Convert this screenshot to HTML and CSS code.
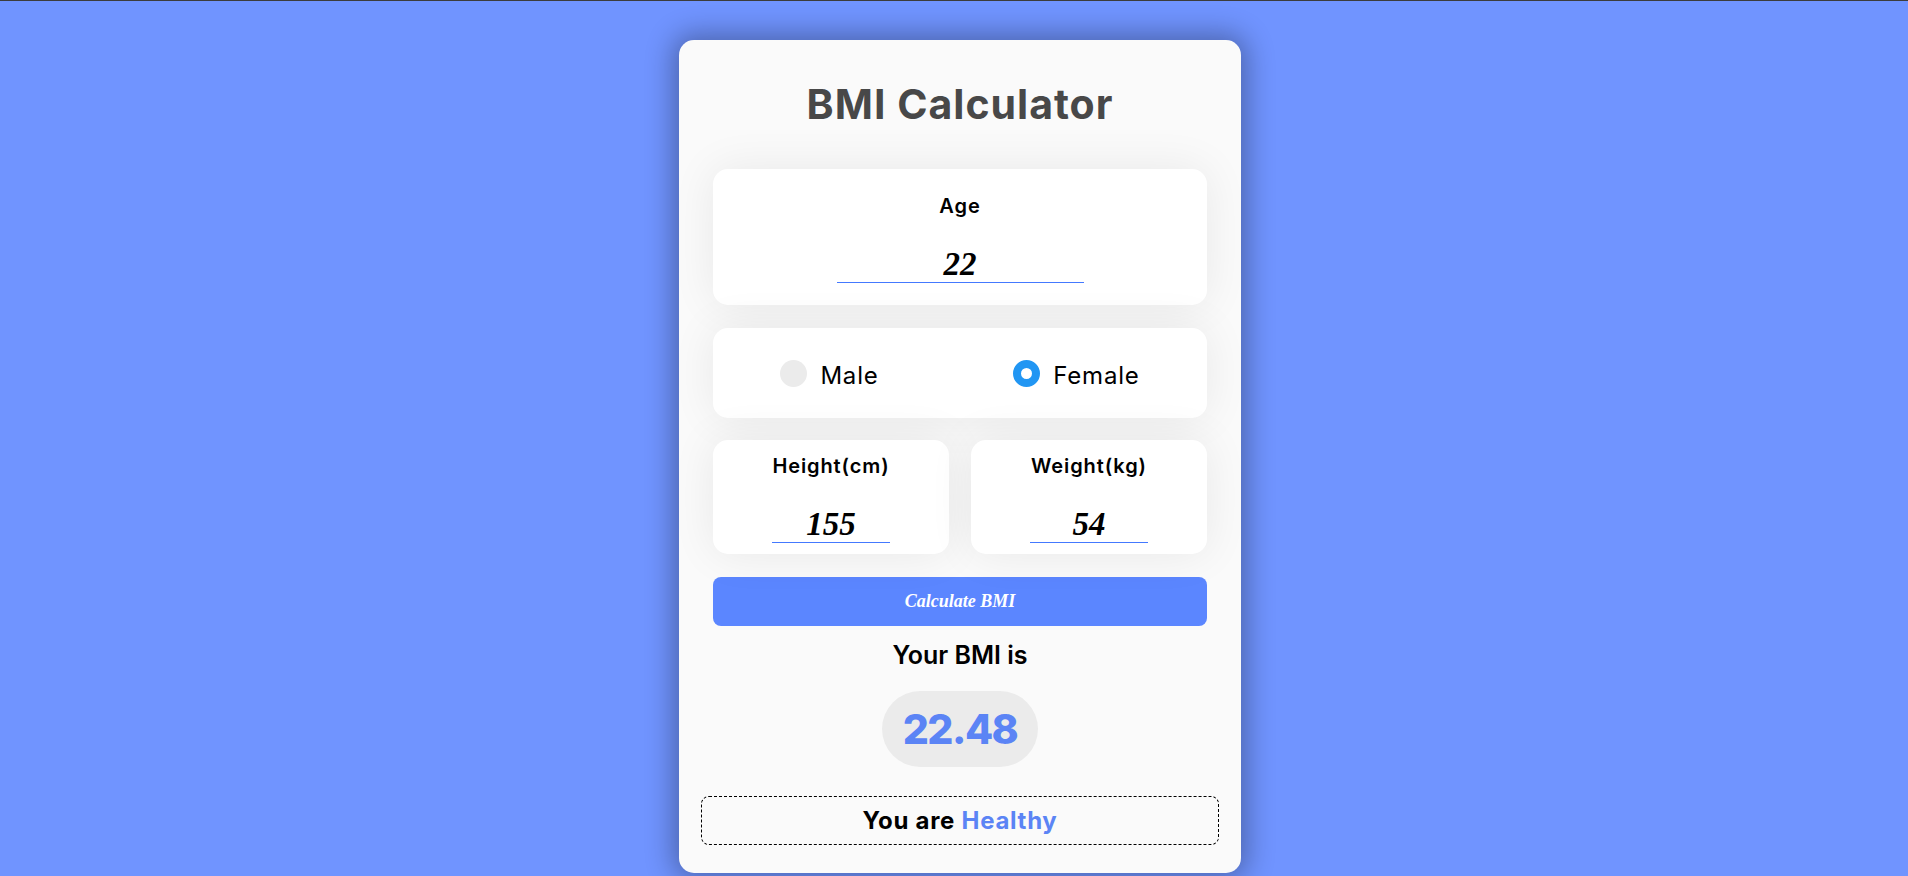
FILE: index.html
```html
<!DOCTYPE html>
<html lang="en">
<head>
<meta charset="utf-8">
<title>BMI Calculator</title>
<link rel="stylesheet" href="styles.css">
</head>
<body>
<div class="card">
  <h1 class="title">BMI Calculator</h1>

  <div class="box age-box">
    <label class="field-label" for="age">Age</label>
    <input class="field-input age-input" id="age" type="text" value="22">
  </div>

  <div class="box gender-box">
    <div class="radio">
      <span class="radio-dot"></span>
      <span class="radio-text">Male</span>
    </div>
    <div class="radio">
      <span class="radio-dot checked"></span>
      <span class="radio-text">Female</span>
    </div>
  </div>

  <div class="pair">
    <div class="box small-box">
      <label class="field-label" for="height">Height(cm)</label>
      <input class="field-input" id="height" type="text" value="155">
    </div>
    <div class="box small-box">
      <label class="field-label" for="weight">Weight(kg)</label>
      <input class="field-input" id="weight" type="text" value="54">
    </div>
  </div>

  <button class="calc-btn" type="button">Calculate BMI</button>

  <p class="result-label">Your BMI is</p>
  <div class="pill-row"><span class="pill">22.48</span></div>

  <div class="status">You are <span class="status-word">Healthy</span></div>
</div>
</body>
</html>
```

FILE: styles.css
```css
* { box-sizing: border-box; }

html, body {
  margin: 0;
  padding: 0;
}

body {
  background: #7094ff;
  border-top: 1px solid #3c3c3c;
  height: 876px;
  overflow: hidden;
  padding-left: 12px;
  font-family: "Inter", "Noto Sans", sans-serif;
}

.card {
  width: 562px;
  margin: 39px auto 0;
  background: #fafafa;
  border-radius: 15px;
  padding: 0 22px 28px;
  box-shadow: 0 0 28px 6px rgba(0, 0, 0, 0.32);
}

.title {
  margin: 0 0 35px;
  padding-top: 34px;
  line-height: 60px;
  font-size: 41px;
  font-weight: 700;
  letter-spacing: 1px;
  text-align: center;
  color: #484848;
}

.box {
  margin: 0 12px;
  background: #ffffff;
  border-radius: 15px;
  box-shadow: 0 0 45px rgba(0, 0, 0, 0.075);
}

.age-box {
  display: flex;
  flex-direction: column;
  align-items: center;
  padding: 22px 0;
  height: 136px;
}

.field-label {
  display: block;
  line-height: 30px;
  font-size: 20px;
  font-weight: 600;
  letter-spacing: 0.9px;
  color: #000;
  text-align: center;
}

.field-input {
  display: block;
  width: 50%;
  height: 44px;
  margin-top: 18px;
  border: none;
  border-bottom: 1px solid #4479ff;
  background: transparent;
  text-align: center;
  font-family: "Liberation Serif", "DejaVu Serif", serif;
  font-style: italic;
  font-weight: 700;
  font-size: 33px;
  color: #000;
  padding: 7px 0 0;
  outline: none;
}

.gender-box {
  margin-top: 23px;
  height: 90px;
  display: flex;
  align-items: center;
  justify-content: space-around;
}

.radio {
  display: flex;
  align-items: center;
  gap: 13px;
}

.radio-dot {
  width: 27px;
  height: 27px;
  border-radius: 50%;
  background: #ebebeb;
}

.radio-dot.checked {
  background: #ffffff;
  border: 8px solid #2196f3;
}

.radio-text {
  font-size: 24px;
  font-weight: 400;
  letter-spacing: 0.8px;
  color: #000;
  padding-top: 4px;
}

.pair {
  display: flex;
  gap: 22px;
  margin: 22px 12px 0;
}

.pair .box {
  margin: 0;
  flex: 1;
}

.small-box {
  display: flex;
  flex-direction: column;
  align-items: center;
  height: 114px;
  padding: 11px 0;
}

.calc-btn {
  display: block;
  width: calc(100% - 24px);
  margin: 23px 12px 0;
  height: 49px;
  border: none;
  border-radius: 8px;
  background: #5b86ff;
  color: #ffffff;
  font-family: "Liberation Serif", "DejaVu Serif", serif;
  font-style: italic;
  font-weight: 700;
  font-size: 18px;
}

.result-label {
  margin: 11px 0 0;
  line-height: 36px;
  font-size: 25px;
  font-weight: 600;
  letter-spacing: 0;
  text-align: center;
  color: #000;
}

.pill-row {
  display: flex;
  justify-content: center;
  margin-top: 18px;
}

.pill {
  display: flex;
  align-items: center;
  justify-content: center;
  width: 156px;
  height: 76px;
  border-radius: 38px;
  background: #ebebeb;
  color: #5b84f5;
  font-size: 41px;
  font-weight: 800;
  letter-spacing: -1.5px;
}

.status {
  margin-top: 29px;
  height: 49px;
  border: 1px dashed #000;
  border-radius: 8px;
  display: flex;
  align-items: center;
  justify-content: center;
  gap: 0.27em;
  font-size: 24px;
  font-weight: 700;
  letter-spacing: 0.7px;
  color: #000;
}

.status-word {
  color: #5b84f5;
}
```
